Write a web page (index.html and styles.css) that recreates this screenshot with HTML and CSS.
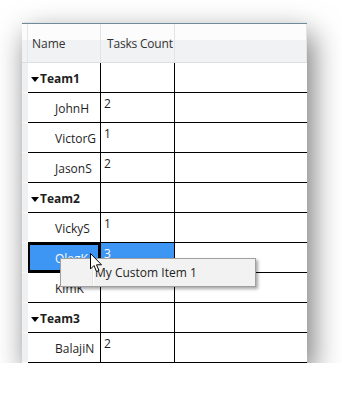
FILE: index.html
```html
<!DOCTYPE html>
<html lang="en">
<head>
    <meta charset="UTF-8">
    <meta name="viewport" content="width=device-width, initial-scale=1.0">
    <title>Grouped Grid</title>
    <link rel="stylesheet" href="styles.css">
</head>
<body>
    <div class="window">
        <!-- Intestazione della griglia -->
        <div class="row header">
            <div class="strip"></div>
            <div class="cell name">Name</div>
            <div class="cell count">Tasks Count</div>
            <div class="cell fill"></div>
        </div>

        <div class="row group">
            <div class="strip"></div>
            <div class="cell name"><span class="arrow"></span>Team1</div>
            <div class="cell count"></div>
            <div class="cell fill"></div>
        </div>
        <div class="row">
            <div class="strip"></div>
            <div class="cell name">JohnH</div>
            <div class="cell count">2</div>
            <div class="cell fill"></div>
        </div>
        <div class="row">
            <div class="strip"></div>
            <div class="cell name">VictorG</div>
            <div class="cell count">1</div>
            <div class="cell fill"></div>
        </div>
        <div class="row">
            <div class="strip"></div>
            <div class="cell name">JasonS</div>
            <div class="cell count">2</div>
            <div class="cell fill"></div>
        </div>

        <div class="row group">
            <div class="strip"></div>
            <div class="cell name"><span class="arrow"></span>Team2</div>
            <div class="cell count"></div>
            <div class="cell fill"></div>
        </div>
        <div class="row">
            <div class="strip"></div>
            <div class="cell name">VickyS</div>
            <div class="cell count">1</div>
            <div class="cell fill"></div>
        </div>
        <div class="row selected">
            <div class="strip"></div>
            <div class="cell name">OlegK</div>
            <div class="cell count">3</div>
            <div class="cell fill"></div>
        </div>
        <div class="row">
            <div class="strip"></div>
            <div class="cell name">KimK</div>
            <div class="cell count"></div>
            <div class="cell fill"></div>
        </div>

        <div class="row group">
            <div class="strip"></div>
            <div class="cell name"><span class="arrow"></span>Team3</div>
            <div class="cell count"></div>
            <div class="cell fill"></div>
        </div>
        <div class="row">
            <div class="strip"></div>
            <div class="cell name">BalajiN</div>
            <div class="cell count">2</div>
            <div class="cell fill"></div>
        </div>

        <!-- Menu contestuale -->
        <div class="menu">
            <div class="menu-gutter"></div>
            <div class="menu-item">My Custom Item 1</div>
        </div>

        <svg class="cursor" width="13" height="20" viewBox="0 0 13 20">
            <path d="M0.5 0.5 L0.5 16 L4 12.5 L6.5 18.5 L9 17.5 L6.5 11.8 L11.5 11.8 Z" fill="#fff" stroke="#000" stroke-width="1"/>
        </svg>
    </div>
</body>
</html>
```

FILE: styles.css
```css
body {
    margin: 0;
    padding: 22px 0 0 22px;
    background-color: #fff;
    font-family: "Open Sans", "Noto Sans", sans-serif;
    font-size: 12px;
    color: #1e1e1e;
}
.window {
    position: relative;
    width: 285px;
    height: 340px;
    overflow: hidden;
    background-color: #fff;
    border-top: 1px solid #dfe3e5;
    box-shadow: 5px 12px 28px rgba(0, 0, 0, 0.55);
}
.row {
    display: grid;
    grid-template-columns: 6px 73px 74px 1fr;
    height: 30px;
}
.strip {
    background-color: #eef0f1;
    border-bottom: 1px solid #f9f9f9;
}
.cell {
    display: flex;
    align-items: center;
    border-bottom: 1px solid #000;
    border-right: 1px solid #000;
    white-space: nowrap;
}
.cell.fill {
    border-right: none;
}
.name {
    padding: 1px 0 0 27px;
}
.count {
    align-items: flex-start;
    padding: 2px 0 0 3px;
}

/* Intestazione */
.header {
    height: 39px;
    border-top: 1px solid #6f8b97;
    background: linear-gradient(#fcfcfd 0, #fcfcfd 42%, #f1f2f4 42%, #f1f2f4 100%);
    color: #333;
}
.header .strip {
    background: none;
    border-bottom: 1px solid #dcdfe2;
    border-right: 1px solid #e4e6e8;
}
.header .cell {
    align-items: center;
    border-bottom: 1px solid #dcdfe2;
    border-right: 1px solid #e2e4e6;
    padding-top: 1px;
}
.header .name {
    padding-left: 4px;
}
.header .count {
    padding-left: 6px;
    letter-spacing: -0.2px;
}

/* Righe di gruppo */
.group .name {
    padding-left: 3px;
    font-weight: bold;
}
.arrow {
    width: 0;
    height: 0;
    border-left: 4px solid transparent;
    border-right: 4px solid transparent;
    border-top: 5px solid #000;
    margin: 2px 1px 0 0;
}

/* Riga selezionata */
.selected .name,
.selected .count {
    background-color: #3d95f4;
    color: #fff;
}
.selected .name {
    box-shadow: inset 0 0 0 2px #000;
}

/* Menu contestuale */
.menu {
    position: absolute;
    left: 38px;
    top: 235px;
    width: 194px;
    height: 27px;
    display: flex;
    background-color: #f2f2f2;
    border: 1px solid #a0a0a0;
    box-shadow: 2px 2px 3px rgba(0, 0, 0, 0.35);
}
.menu-gutter {
    width: 31px;
    border-right: 1px solid #e2e2e2;
    box-shadow: 1px 0 0 #fff;
}
.menu-item {
    display: flex;
    align-items: center;
    padding-left: 2px;
    font-size: 12px;
    color: #222;
}
.cursor {
    position: absolute;
    left: 68px;
    top: 230px;
}
```
